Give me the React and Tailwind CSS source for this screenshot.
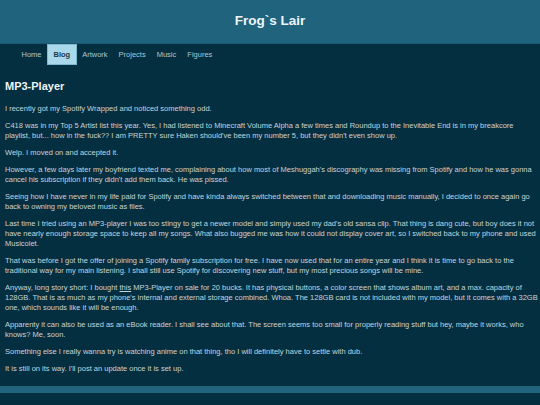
const navItems = ['Home', 'Blog', 'Artwork', 'Projects', 'Music', 'Figures']

export default function App() {
  return (
    <div className="min-h-[405px] bg-[#042f40] font-['Liberation_Sans',Arial,sans-serif]">
      <header className="flex h-[44px] items-center justify-center border-b border-[#1a5670] bg-[#1f637d]">
        <h1 className="text-[13.5px] font-bold text-[#eef5f8]">Frog`s Lair</h1>
      </header>

      <nav className="flex h-[21px] pl-[16px] text-[7.5px]">
        {navItems.map((item) =>
          item === 'Blog' ? (
            <span key={item} className="flex items-center border border-[#7fb9cf] bg-[#a8d8ea] px-[5.5px] font-bold text-[#173848]">
              {item}
            </span>
          ) : (
            <span key={item} className="flex items-center px-[5.5px] text-[#a9c7d5]">
              {item}
            </span>
          )
        )}
      </nav>

      <main className="pl-[5px] pr-[2px] pb-[12px] text-[7.5px] leading-[10px] text-[#c6d4dc]">
        <h2 className="mt-[15px] mb-[11px] text-[11px] leading-[13px] font-bold text-[#eef5f8]">MP3-Player</h2>
        <div className="space-y-[7px]">
          <p>I recently got my Spotify Wrapped and noticed something odd.</p>
          <p>
            C418 was in my Top 5 Artist list this year. Yes, I had listened to Minecraft Volume Alpha a few times and Roundup to the Inevitable End is in my breakcore playlist, but... how in the fuck?? I am PRETTY sure Haken should've been my number 5, but they didn't even show up.
          </p>
          <p>Welp. I moved on and accepted it.</p>
          <p>
            However, a few days later my boyfriend texted me, complaining about how most of Meshuggah's discography was missing from Spotify and how he was gonna cancel his subscription if they didn't add them back. He was pissed.
          </p>
          <p>
            Seeing how I have never in my life paid for Spotify and have kinda always switched between that and downloading music manually, I decided to once again go back to owning my beloved music as files.
          </p>
          <p>
            Last time I tried using an MP3-player I was too stingy to get a newer model and simply used my dad's old sansa clip. That thing is dang cute, but boy does it not have nearly enough storage space to keep all my songs. What also bugged me was how it could not display cover art, so I switched back to my phone and used Musicolet.
          </p>
          <p>
            That was before I got the offer of joining a Spotify family subscription for free. I have now used that for an entire year and I think it is time to go back to the traditional way for my main listening. I shall still use Spotify for discovering new stuff, but my most precious songs will be mine.
          </p>
          <p>
            Anyway, long story short: I bought <span className="underline">this</span> MP3-Player on sale for 20 bucks. It has physical buttons, a color screen that shows album art, and a max. capacity of 128GB. That is as much as my phone's internal and external storage combined. Whoa. The 128GB card is not included with my model, but it comes with a 32GB one, which sounds like it will be enough.
          </p>
          <p>
            Apparenty it can also be used as an eBook reader. I shall see about that. The screen seems too small for properly reading stuff but hey, maybe it works, who knows? Me, soon.
          </p>
          <p>Something else I really wanna try is watching anime on that thing, tho I will definitely have to settle with dub.</p>
          <p>It is still on its way. I'll post an update once it is set up.</p>
        </div>
      </main>

      <footer className="h-[7px] bg-[#21647e]" />
    </div>
  )
}
